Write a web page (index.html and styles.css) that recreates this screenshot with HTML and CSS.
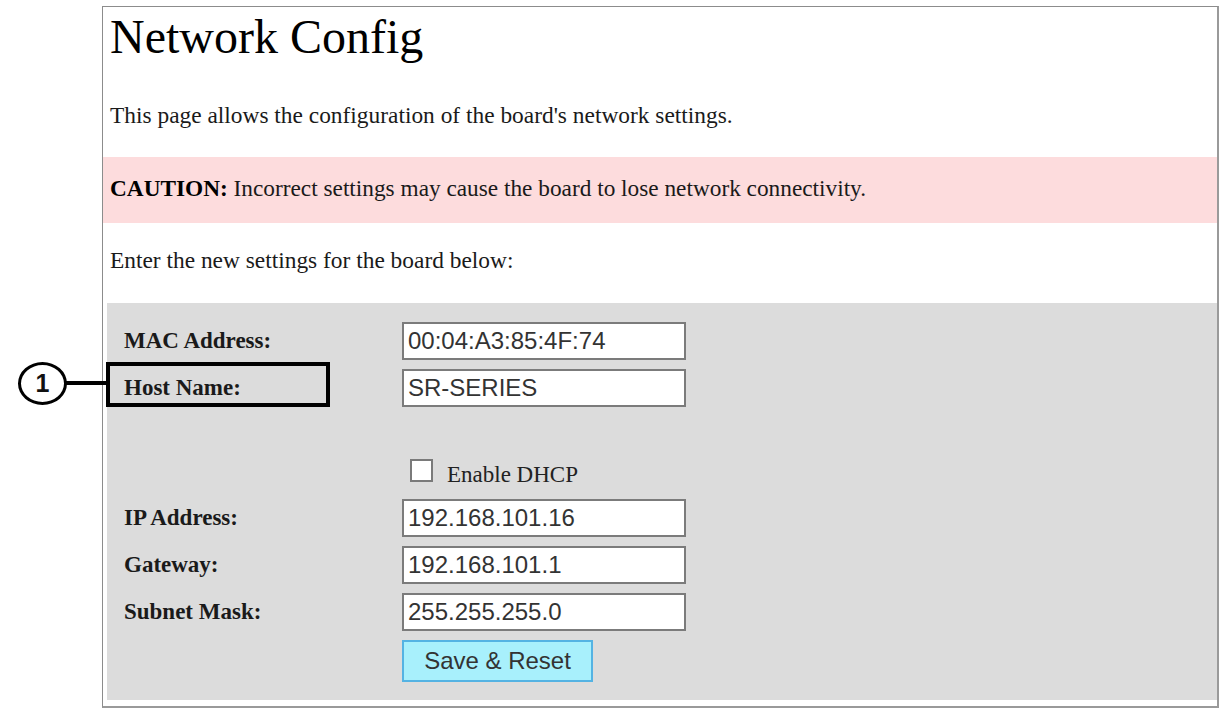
FILE: index.html
```html
<!DOCTYPE html>
<html>
<head>
<meta charset="utf-8">
<title>Network Config</title>
<link rel="stylesheet" href="styles.css">
</head>
<body>
<div class="frame">
  <h1 class="title">Network Config</h1>
  <p class="intro">This page allows the configuration of the board's network settings.</p>
  <div class="caution"><b>CAUTION:</b> Incorrect settings may cause the board to lose network connectivity.</div>
  <p class="enter">Enter the new settings for the board below:</p>
  <form class="panel">
    <label class="lbl">MAC Address:</label>
    <input class="field" type="text" value="00:04:A3:85:4F:74">
    <label class="lbl">Host Name:</label>
    <input class="field" type="text" value="SR-SERIES">
    <div class="dhcp"><span class="box"></span><span class="dhcp-text">Enable DHCP</span></div>
    <label class="lbl">IP Address:</label>
    <input class="field" type="text" value="192.168.101.16">
    <label class="lbl">Gateway:</label>
    <input class="field" type="text" value="192.168.101.1">
    <label class="lbl">Subnet Mask:</label>
    <input class="field" type="text" value="255.255.255.0">
    <div class="btn-cell"><button class="btn" type="button">Save &amp; Reset</button></div>
  </form>
</div>
<div class="callout-circle">1</div>
<div class="callout-line"></div>
<div class="callout-rect"></div>
</body>
</html>
```
FILE: styles.css
```css
html, body {
  margin: 0;
  padding: 0;
  background: #fff;
}
body {
  font-family: "Liberation Serif", "Times New Roman", serif;
  color: #1a1a1a;
}
.frame {
  box-sizing: border-box;
  margin: 6px 0 0 102px;
  width: 1117px;
  height: 702px;
  border: 1px solid #8c8c8c;
  border-right: 2px solid #9a9a9a;
  border-bottom: 2px solid #9a9a9a;
  display: flex;
  flex-direction: column;
}
.title {
  margin: 0;
  padding: 2px 0 0 7px;
  font-size: 48px;
  font-weight: normal;
  line-height: 56px;
  color: #000;
}
.intro, .enter {
  margin: 0;
  padding-left: 7px;
  font-size: 23.4px;
  line-height: 26px;
}
.intro { margin-top: 37px; }
.caution {
  margin-top: 29px;
  background: #fddcdd;
  padding: 18px 0 22px 7px;
  font-size: 23.3px;
  line-height: 26px;
}
.caution b { color: #000; }
.enter { margin-top: 24px; }
.panel {
  margin: 30px 0 0 4px;
  background: #dcdcdc;
  padding: 19px 0 18px 17px;
  display: grid;
  grid-template-columns: 278px 1fr;
  row-gap: 9px;
  align-items: center;
}
.lbl {
  grid-column: 1;
  font-weight: bold;
  font-size: 23px;
  color: #1a1a1a;
}
.field {
  grid-column: 2;
  box-sizing: border-box;
  width: 284px;
  height: 38px;
  margin: 0;
  padding: 0 0 0 4px;
  border: 2px solid #7b7b7b;
  background: #fff;
  font-family: "Liberation Sans", Arial, sans-serif;
  font-size: 24px;
  color: #333;
  outline: none;
}
.dhcp {
  grid-column: 2;
  margin-top: 39px;
  height: 35px;
  display: flex;
  align-items: flex-start;
}
.box {
  box-sizing: border-box;
  width: 23px;
  height: 23px;
  margin: 4px 0 0 8px;
  background: #fff;
  border: 2px solid #7a7a7a;
}
.dhcp-text {
  margin: 7px 0 0 14px;
  font-size: 23px;
  line-height: 26px;
  color: #222;
}
.btn-cell {
  grid-column: 2;
}
.btn {
  box-sizing: border-box;
  width: 191px;
  height: 42px;
  margin: 0;
  padding: 0;
  background: #a8f0fc;
  border: 2px solid #54b3e3;
  font-family: "Liberation Sans", Arial, sans-serif;
  font-size: 24px;
  color: #333;
}
.callout-circle {
  position: absolute;
  left: 18px;
  top: 362px;
  box-sizing: border-box;
  width: 49px;
  height: 43px;
  border: 3px solid #000;
  border-radius: 50%;
  display: flex;
  align-items: center;
  justify-content: center;
  font-family: "Liberation Sans", Arial, sans-serif;
  font-weight: bold;
  font-size: 25px;
  color: #111;
  background: #fff;
}
.callout-line {
  position: absolute;
  left: 66px;
  top: 381px;
  width: 42px;
  height: 4px;
  background: #000;
}
.callout-rect {
  position: absolute;
  left: 106px;
  top: 362px;
  box-sizing: border-box;
  width: 224px;
  height: 45px;
  border: 4px solid #000;
}
```
